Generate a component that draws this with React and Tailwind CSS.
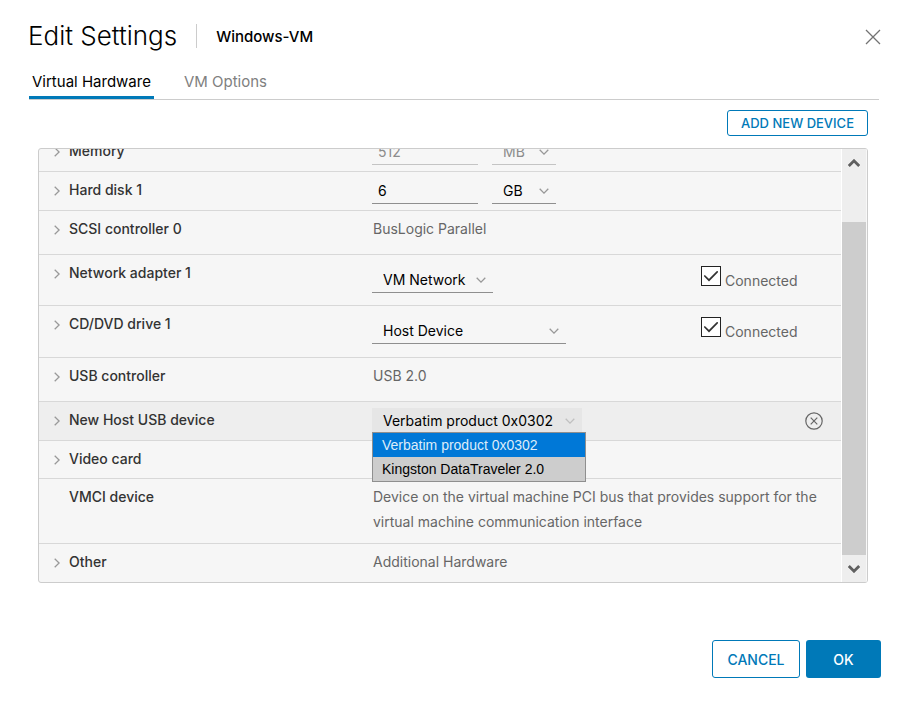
import React, { useState } from 'react';

function Chevron({ className }) {
  return (
    <svg className={className} viewBox="0 0 10 6" fill="none" stroke="currentColor" strokeWidth="1.3">
      <path d="M0.7 0.7 5 5.1 9.3 0.7" />
    </svg>
  );
}

function Select({ label, options, className, muted, open }) {
  return (
    <div className={`relative h-[26px] ${className}`}>
      <select
        aria-label={label}
        disabled={muted}
        className={`block h-full w-full appearance-none border-b pl-[11px] outline-none ${
          muted ? 'border-[#c4c4c4] text-[#8c8c8c]' : 'text-black'
        } ${open ? 'border-transparent bg-[#e6e6e6]' : 'border-[#8f8f8f]'}`}
      >
        {options.map((option) => (
          <option key={option}>{option}</option>
        ))}
      </select>
      <Chevron
        className={`pointer-events-none absolute top-[10px] right-[7px] w-[10px] ${
          open ? 'text-[#c0c0c0]' : 'text-[#999]'
        }`}
      />
    </div>
  );
}

function SizeField({ id, value, unit, muted }) {
  return (
    <div className="flex gap-[14px] pt-[6px]">
      <input
        id={id}
        type="text"
        defaultValue={value}
        disabled={muted}
        className={`h-[26px] w-[106px] border-b pl-[6px] outline-none ${
          muted ? 'border-[#c4c4c4] text-[#8c8c8c]' : 'border-[#8f8f8f] text-black'
        }`}
      />
      <Select label={`${id} unit`} options={[unit]} className="w-[64px]" muted={muted} />
    </div>
  );
}

function Connected() {
  const [checked, setChecked] = useState(true);

  return (
    <label className="flex items-start gap-1 pt-[11px] text-[#666]">
      <span className="relative size-5">
        <input
          type="checkbox"
          checked={checked}
          onChange={() => setChecked(!checked)}
          className="block size-5 appearance-none border border-[#222] bg-white"
        />
        {checked && (
          <svg className="pointer-events-none absolute inset-0 size-5" viewBox="0 0 20 20" fill="none" stroke="#333" strokeWidth="1.7">
            <path d="M3.8 10 8 14.2 16.2 5.8" strokeLinecap="round" />
          </svg>
        )}
      </span>
      <span className="mt-[2px]">Connected</span>
    </label>
  );
}

function Row({ name, className, leaf, htmlFor, children }) {
  return (
    <div className={`grid grid-cols-[333px_1fr_140px] border-b border-[#d8d8d8] ${className}`}>
      <div className="flex items-start pt-[5px] pl-[13px]">
        <span className="flex h-[27px] w-[17px] items-center text-[#999]">
          {!leaf && (
            <button aria-label={`Expand ${name}`}>
              <Chevron className="w-[10px] -rotate-90" />
            </button>
          )}
        </span>
        <label htmlFor={htmlFor} className="font-medium text-[#333]">
          {name}
        </label>
      </div>
      {children}
    </div>
  );
}

function Value({ children }) {
  return <div className="col-span-2 pt-[5px] pr-4 pl-px text-[#666]">{children}</div>;
}

function UsbMenu() {
  return (
    <ul
      role="listbox"
      aria-label="Host USB devices"
      className="absolute top-[30px] left-0 z-10 w-[214px] border border-[#8f8f8f] bg-[#cdcdcd] font-['Liberation_Sans',sans-serif] leading-6 text-black"
    >
      <li role="option" aria-selected="true" className="bg-[#0078d7] pl-[9px] text-[#dcecf9]">
        Verbatim product 0x0302
      </li>
      <li role="option" aria-selected="false" className="pl-[9px]">
        Kingston DataTraveler 2.0
      </li>
    </ul>
  );
}

function Scrollbar() {
  return (
    <div className="flex w-[26px] shrink-0 flex-col border-x border-l-white border-r-[#f8f8f8] bg-[#eee] text-[#606060]">
      <button aria-label="Scroll up" className="flex h-7 items-center justify-center">
        <svg className="h-2 w-3" viewBox="0 0 12 8" fill="none" stroke="currentColor" strokeWidth="2.8">
          <path d="M0.8 7 6 1.8 11.2 7" />
        </svg>
      </button>
      <div className="mt-[45px] flex-1 bg-[#cdcdcd]"></div>
      <button aria-label="Scroll down" className="flex h-[27px] items-center justify-center">
        <svg className="h-2 w-3" viewBox="0 0 12 8" fill="none" stroke="currentColor" strokeWidth="2.8">
          <path d="M0.8 1 6 6.2 11.2 1" />
        </svg>
      </button>
    </div>
  );
}

export default function App() {
  return (
    <div className="bg-white pt-5 pr-[25px] pb-6 pl-7 font-['Inter',sans-serif] text-[14px] leading-[25px]">
      <header className="flex items-center">
        <h1 className="text-[26px] leading-8 font-light text-black">Edit Settings</h1>
        <div className="ml-[19px] h-6 w-px bg-[#ccc]"></div>
        <h2 className="ml-[19px] text-[15px] font-medium text-black">Windows-VM</h2>
        <button aria-label="Close" className="ml-auto pt-[2px] text-[#737373]">
          <svg className="size-4" viewBox="0 0 16 16" fill="none" stroke="currentColor" strokeWidth="1.3">
            <path d="M1 1 15 15M15 1 1 15" />
          </svg>
        </button>
      </header>

      <nav role="tablist" className="mr-[2px] ml-px mt-[14px] flex gap-[26px] border-b border-[#ccc] text-[15px]">
        <button role="tab" aria-selected="true" className="border-b-3 border-[#0079b8] px-[3px] pt-[3px] pb-[2px] text-black">
          Virtual Hardware
        </button>
        <button role="tab" aria-selected="false" className="px-1 pt-[3px] pb-[5px] text-[#808080]">
          VM Options
        </button>
      </nav>

      <main className="mr-[13px] ml-[10px] mt-[10px]">
        <div className="flex justify-end">
          <button className="h-[26px] rounded-[3px] border border-[#0079b8] px-[13px] text-[13px] leading-6 font-medium text-[#0079b8]">
            ADD NEW DEVICE
          </button>
        </div>

        <div className="mt-3 flex overflow-hidden rounded-[3px] border border-[#ccc] bg-[#f6f6f6]">
          <div className="flex-1">
            {/* Scrolled partly out of view */}
            <Row name="Memory" className="-mt-4 min-h-[39px]" htmlFor="memory">
              <SizeField id="memory" value="512" unit="MB" muted />
            </Row>
            <Row name="Hard disk 1" className="min-h-[39px]" htmlFor="hard-disk">
              <SizeField id="hard-disk" value="6" unit="GB" />
            </Row>
            <Row name="SCSI controller 0" className="min-h-[44px]">
              <Value>BusLogic Parallel</Value>
            </Row>
            <Row name="Network adapter 1" className="min-h-[51px]">
              <div className="pt-3">
                <Select label="Network" options={['VM Network']} className="w-[121px]" />
              </div>
              <Connected />
            </Row>
            <Row name="CD/DVD drive 1" className="min-h-[52px]">
              <div className="pt-3">
                <Select label="Drive" options={['Host Device']} className="w-[194px]" />
              </div>
              <Connected />
            </Row>
            <Row name="USB controller" className="min-h-[44px]">
              <Value>USB 2.0</Value>
            </Row>
            <Row name="New Host USB device" className="min-h-[39px] bg-[#eee]">
              <div className="relative pt-[6px]">
                <Select
                  label="Host USB device"
                  options={['Verbatim product 0x0302', 'Kingston DataTraveler 2.0']}
                  className="w-[210px]"
                  open
                />
                <UsbMenu />
              </div>
              <div className="flex items-center justify-end pr-[18px]">
                <button aria-label="Remove device" className="text-[#666]">
                  <svg className="size-[18px]" viewBox="0 0 18 18" fill="none" stroke="currentColor" strokeWidth="1.2">
                    <circle cx="9" cy="9" r="8.2" />
                    <path d="M5.7 5.7 12.3 12.3M12.3 5.7 5.7 12.3" />
                  </svg>
                </button>
              </div>
            </Row>
            <Row name="Video card" className="min-h-[38px]" />
            <Row name="VMCI device" className="min-h-[65px]" leaf>
              <Value>
                Device on the virtual machine PCI bus that provides support for the virtual machine
                communication interface
              </Value>
            </Row>
            <Row name="Other" className="min-h-[38px] border-b-0">
              <Value>Additional Hardware</Value>
            </Row>
          </div>
          <Scrollbar />
        </div>
      </main>

      <footer className="mt-[57px] flex justify-end gap-[6px]">
        <button className="h-[38px] w-[88px] rounded-[3px] border border-[#0079b8] text-[14px] font-medium text-[#0079b8]">
          CANCEL
        </button>
        <button className="h-[38px] w-[75px] rounded-[3px] bg-[#0079b8] text-[14px] font-medium text-white">
          OK
        </button>
      </footer>
    </div>
  );
}
